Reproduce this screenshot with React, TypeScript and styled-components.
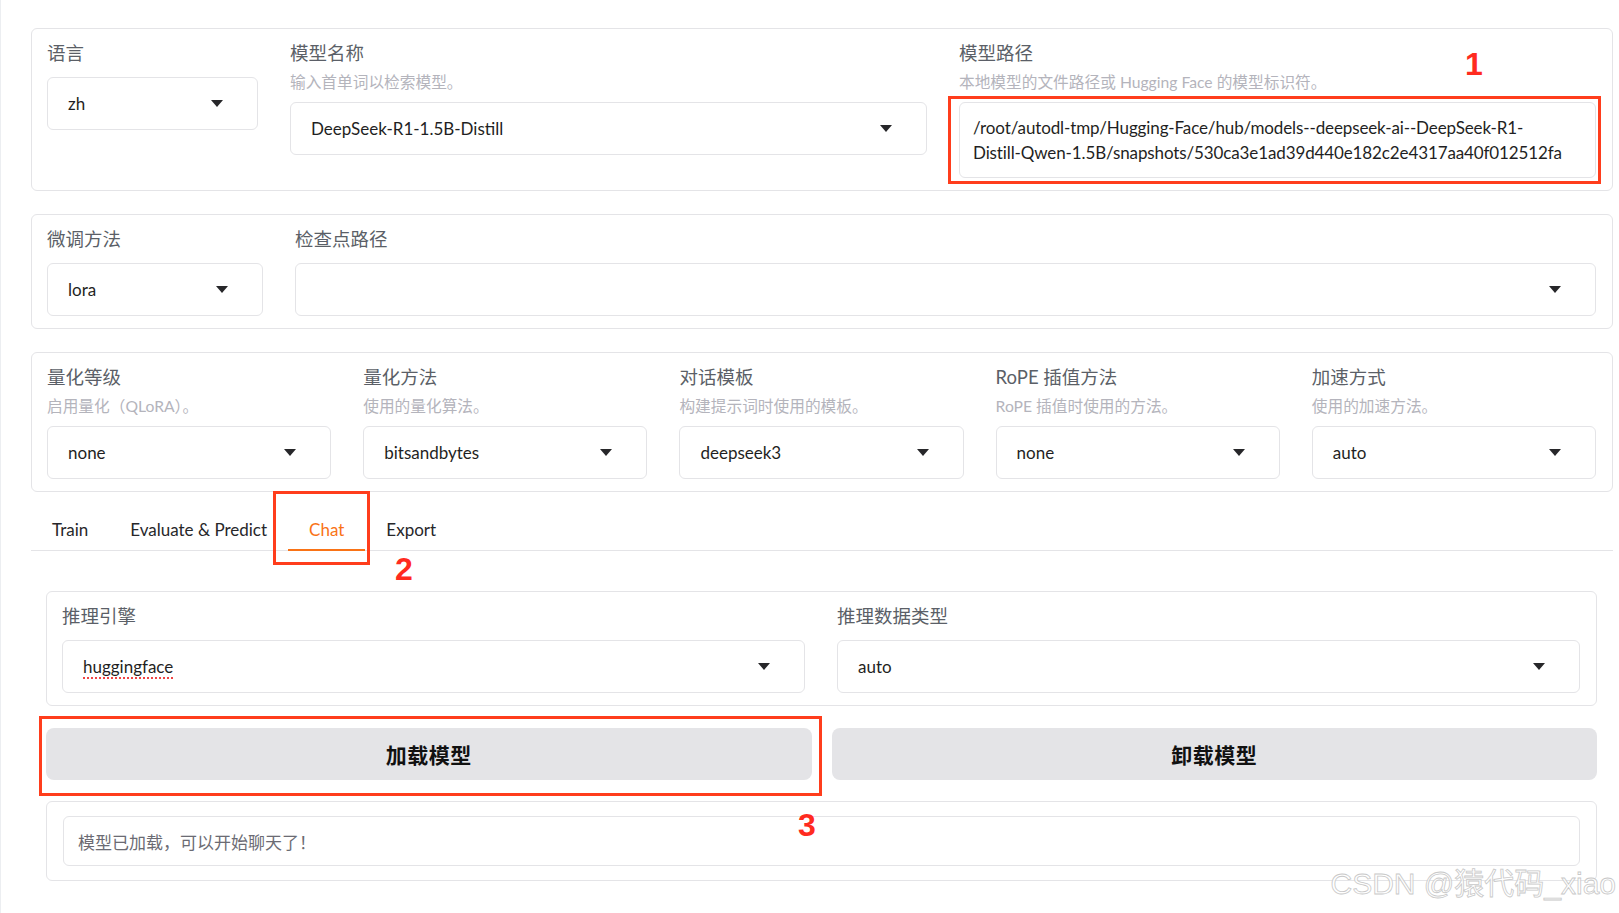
import React from 'react';
import styled, { createGlobalStyle } from 'styled-components';

const GlobalStyle = createGlobalStyle`
  html, body {
    margin: 0;
    padding: 0;
    background: #ffffff;
  }
  body {
    font-family: Lato, "Noto Sans CJK SC", sans-serif;
    color: #27272a;
  }
  * {
    box-sizing: border-box;
  }
`;

const Page = styled.div`
  position: relative;
  width: 1619px;
  height: 913px;
  overflow: hidden;
  padding: 28px 6px 0 30px;
  border-left: 1px solid #eceef1;
`;

const Panel = styled.section<{ $mt?: number }>`
  display: flex;
  align-items: flex-start;
  gap: 32px;
  margin-top: ${({ $mt }) => $mt ?? 0}px;
  padding: 12px 16px 12px 15px;
  border: 1px solid #e4e4e7;
  border-radius: 6px;
  background: #fff;
`;

const Field = styled.div<{ $width?: number }>`
  display: flex;
  flex-direction: column;
  flex: ${({ $width }) => ($width ? `0 0 ${$width}px` : '1 1 0')};
  min-width: 0;
`;

const Label = styled.span`
  font-size: 18.5px;
  line-height: 24px;
  color: #5b5f67;
  margin-bottom: 12px;
`;

const Hint = styled.span`
  font-size: 15.7px;
  line-height: 22px;
  color: #b4b4bc;
  margin: -6px 0 9px;
`;

const SelectBox = styled.div`
  height: 53px;
  display: flex;
  align-items: center;
  justify-content: space-between;
  padding: 0 34px 0 20px;
  border: 1px solid #e4e4e7;
  border-radius: 6px;
  background: #fff;
  font-size: 17px;
  color: #1f1f23;
`;

const SelectValue = styled.span<{ $spell?: boolean }>`
  white-space: nowrap;
  text-decoration: ${({ $spell }) => ($spell ? 'underline dotted #ef4444' : 'none')};
  text-underline-offset: 4px;
  text-decoration-thickness: 2px;
`;

const PathBox = styled.div`
  padding: 12px 13px;
  border: 1px solid #e4e4e7;
  border-radius: 6px;
  font-size: 17px;
  line-height: 25px;
  letter-spacing: -0.12px;
  color: #1f1f23;
  white-space: nowrap;
`;

const TabBar = styled.nav`
  display: flex;
  margin-top: 18px;
  border-bottom: 1px solid #e4e4e7;
`;

const Tab = styled.div<{ $active?: boolean }>`
  position: relative;
  height: 40px;
  line-height: 40px;
  padding: 0 21px;
  font-size: 17px;
  color: ${({ $active }) => ($active ? '#f97316' : '#27272a')};

  &::after {
    content: '';
    display: ${({ $active }) => ($active ? 'block' : 'none')};
    position: absolute;
    left: 0;
    right: 0;
    bottom: -1px;
    height: 2px;
    background: #f97316;
  }
`;

const TabContent = styled.div`
  padding: 40px 16px 0 15px;
`;

const ButtonRow = styled.div`
  display: flex;
  gap: 20px;
  margin-top: 22px;
`;

const ButtonSlot = styled.div`
  position: relative;
  display: flex;
  flex: 1 1 0;
  min-width: 0;
`;

const Button = styled.button`
  flex: 1 1 0;
  height: 52px;
  padding: 0;
  border: none;
  border-radius: 8px;
  background: #e4e4e7;
  font-family: "Noto Sans CJK SC", sans-serif;
  font-size: 21px;
  font-weight: 700;
  color: #111;
  letter-spacing: 0.5px;
`;

const OutputPanel = styled.section`
  margin-top: 21px;
  padding: 14px 16px 14px 16px;
  border: 1px solid #e4e4e7;
  border-radius: 6px;
`;

const OutputBox = styled.div`
  height: 50px;
  display: flex;
  align-items: center;
  padding: 0 14px;
  border: 1px solid #e4e4e7;
  border-radius: 6px;
  font-size: 17px;
  color: #6b6b73;
`;

const Marked = styled.div`
  position: relative;
`;

const RedBox = styled.div<{ $t: number; $r: number; $b: number; $l: number }>`
  position: absolute;
  top: ${({ $t }) => $t}px;
  right: ${({ $r }) => $r}px;
  bottom: ${({ $b }) => $b}px;
  left: ${({ $l }) => $l}px;
  border: 3px solid #ff3d1c;
  pointer-events: none;
`;

const RedNum = styled.span<{ $x: number; $y: number }>`
  position: absolute;
  left: ${({ $x }) => $x}px;
  top: ${({ $y }) => $y}px;
  font-family: "Liberation Sans", Arial, sans-serif;
  font-size: 32px;
  font-weight: 700;
  line-height: 1;
  color: #ff2b1f;
`;

const Watermark = styled.div`
  position: absolute;
  right: 3px;
  bottom: 10px;
  font-family: "Liberation Sans", "Noto Sans CJK SC", sans-serif;
  font-size: 30px;
  color: rgba(255, 255, 255, 0.9);
  -webkit-text-stroke: 0.8px #c8c8c8;
  white-space: nowrap;
`;

const Arrow = () => (
  <svg width="12" height="7" viewBox="0 0 12 7">
    <path d="M0 0h12L6 7z" fill="#27272a" />
  </svg>
);

const Select: React.FC<{ value?: string; spell?: boolean }> = ({ value, spell }) => (
  <SelectBox>
    <SelectValue $spell={spell}>{value}</SelectValue>
    <Arrow />
  </SelectBox>
);

interface IField {
  label: string;
  hint?: string;
  width?: number;
  children: React.ReactNode;
}

const FieldBlock: React.FC<IField> = ({ label, hint, width, children }) => (
  <Field $width={width}>
    <Label>{label}</Label>
    {hint && <Hint>{hint}</Hint>}
    {children}
  </Field>
);

const quantFields = [
  { label: '量化等级', hint: '启用量化（QLoRA）。', value: 'none' },
  { label: '量化方法', hint: '使用的量化算法。', value: 'bitsandbytes' },
  { label: '对话模板', hint: '构建提示词时使用的模板。', value: 'deepseek3' },
  { label: 'RoPE 插值方法', hint: 'RoPE 插值时使用的方法。', value: 'none' },
  { label: '加速方式', hint: '使用的加速方法。', value: 'auto' },
];

const tabs = ['Train', 'Evaluate & Predict', 'Chat', 'Export'];

const pathLines = [
  '/root/autodl-tmp/Hugging-Face/hub/models--deepseek-ai--DeepSeek-R1-',
  'Distill-Qwen-1.5B/snapshots/530ca3e1ad39d440e182c2e4317aa40f012512fa',
];

export default function App() {
  return (
    <>
      <GlobalStyle />
      <Page>
        <Panel>
          <FieldBlock label="语言" width={211}>
            <Select value="zh" />
          </FieldBlock>
          <FieldBlock label="模型名称" hint="输入首单词以检索模型。">
            <Select value="DeepSeek-R1-1.5B-Distill" />
          </FieldBlock>
          <FieldBlock label="模型路径" hint="本地模型的文件路径或 Hugging Face 的模型标识符。">
            <Marked>
              <PathBox>
                {pathLines.map((line) => (
                  <div key={line}>{line}</div>
                ))}
              </PathBox>
              <RedBox $t={-6} $r={-5} $b={-6} $l={-11} />
              <RedNum $x={506} $y={-54}>1</RedNum>
            </Marked>
          </FieldBlock>
        </Panel>

        <Panel $mt={23}>
          <FieldBlock label="微调方法" width={216}>
            <Select value="lora" />
          </FieldBlock>
          <FieldBlock label="检查点路径">
            <Select />
          </FieldBlock>
        </Panel>

        <Panel $mt={23}>
          {quantFields.map((f) => (
            <FieldBlock key={f.label} label={f.label} hint={f.hint}>
              <Select value={f.value} />
            </FieldBlock>
          ))}
        </Panel>

        <TabBar>
          {tabs.map((t) =>
            t === 'Chat' ? (
              <Marked key={t}>
                <Tab $active>{t}</Tab>
                <RedBox $t={-19} $r={-5} $b={-15} $l={-15} />
                <RedNum $x={107} $y={43}>2</RedNum>
              </Marked>
            ) : (
              <Tab key={t}>{t}</Tab>
            ),
          )}
        </TabBar>

        <TabContent>
          <Panel>
            <FieldBlock label="推理引擎">
              <Select value="huggingface" spell />
            </FieldBlock>
            <FieldBlock label="推理数据类型">
              <Select value="auto" />
            </FieldBlock>
          </Panel>

          <ButtonRow>
            <ButtonSlot>
              <Button>加载模型</Button>
              <RedBox $t={-12} $r={-10} $b={-16} $l={-7} />
              <RedNum $x={752} $y={81}>3</RedNum>
            </ButtonSlot>
            <ButtonSlot>
              <Button>卸载模型</Button>
            </ButtonSlot>
          </ButtonRow>

          <OutputPanel>
            <OutputBox>模型已加载，可以开始聊天了！</OutputBox>
          </OutputPanel>
        </TabContent>

        <Watermark>CSDN @猿代码_xiao</Watermark>
      </Page>
    </>
  );
}
